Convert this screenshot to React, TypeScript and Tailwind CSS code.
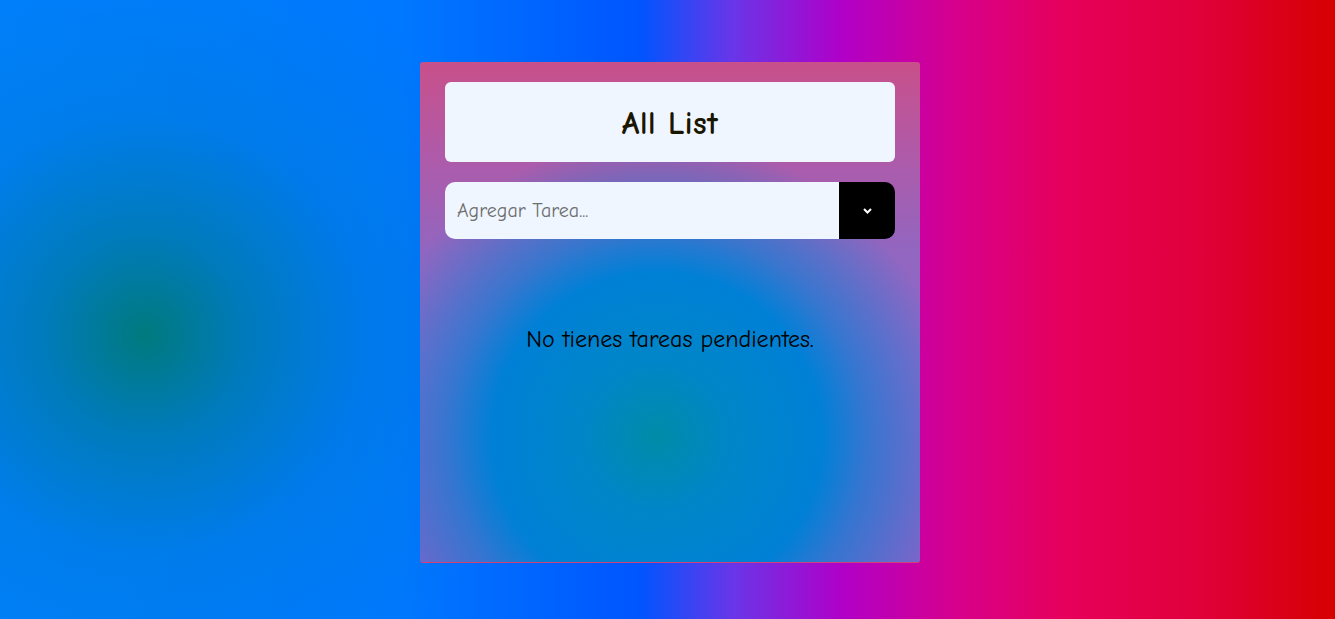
import React from "react";

export default function App() {
  const font = '"Comic Sans MS", "Comic Neue", "Open Sans", sans-serif';
  return (
    <div
      className="min-h-screen w-full flex justify-center pl-[5px] pt-[62px] bg-[radial-gradient(ellipse_400px_400px_at_145px_335px,rgba(0,122,125,1)_0%,rgba(0,122,170,0.8)_25%,rgba(0,122,210,0.45)_55%,rgba(0,122,255,0)_100%),linear-gradient(to_right,#0080ff_0%,#0078ff_30%,#0055ff_48%,#6a35e8_55%,#b000c8_63%,#d8008a_72%,#e6005a_80%,#e0003a_90%,#d60000_100%)]"
      style={{ fontFamily: font }}
    >
      <div className="w-[500px] h-[501px] rounded-[3px] px-[25px] pt-[20px] flex flex-col border-b border-[#d0407a] bg-[radial-gradient(ellipse_300px_300px_at_237px_375px,rgba(0,140,168,1)_0%,rgba(0,134,200,1)_25%,rgba(0,128,214,1)_55%,rgba(0,128,214,0.6)_70%,rgba(0,128,214,0)_100%),linear-gradient(to_bottom,#c8508a_0%,#b05aa8_18%,#9266c0_38%,#8a68c8_60%,#8264c8_100%)]">
        <div className="h-[80px] rounded-[6px] bg-[#eff6ff] flex items-center justify-center">
          <h1 className="text-[32px] font-bold text-[#1a1600] tracking-[0.5px] translate-y-[2px]">All List</h1>
        </div>
        <div className="mt-[20px] h-[57px] flex">
          <div className="flex-1 bg-[#eff6ff] rounded-l-[10px] flex items-center pl-[12px]">
            <input
              className="w-full bg-transparent outline-none text-[20px] text-[#222] placeholder:text-[#6e6e6e]"
              placeholder="Agregar Tarea..."
              style={{ fontFamily: font }}
            />
          </div>
          <button className="w-[56px] bg-black rounded-r-[10px] flex items-center justify-center">
            <svg width="9" height="6" viewBox="0 0 9 6">
              <path d="M1 1 L4.5 4.5 L8 1" stroke="white" strokeWidth="2" fill="none" />
            </svg>
          </button>
        </div>
        <p className="mt-[82px] text-center text-[24px] text-black">No tienes tareas pendientes.</p>
      </div>
    </div>
  );
}
